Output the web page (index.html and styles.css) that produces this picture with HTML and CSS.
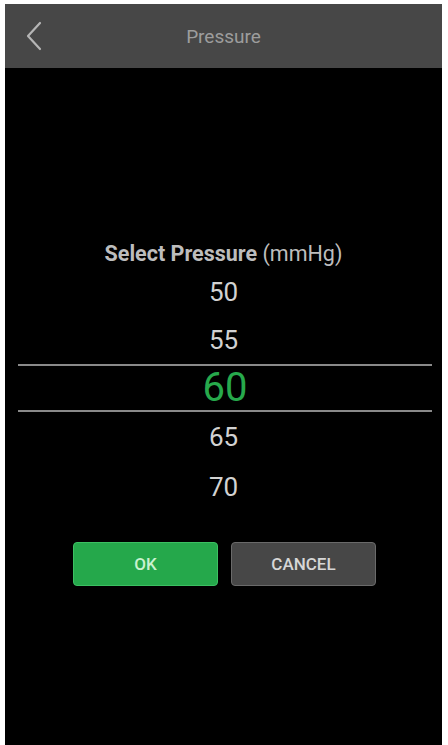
FILE: index.html
```html
<!DOCTYPE html>
<html lang="en">
<head>
    <meta charset="UTF-8">
    <meta name="viewport" content="width=device-width, initial-scale=1.0">
    <title>Pressure</title>
    <link rel="stylesheet" href="styles.css">
</head>
<body>
    <div class="phone">
        <!-- Top bar -->
        <div class="topbar">
            <button class="back" type="button" aria-label="Back">
                <svg width="18" height="30" viewBox="0 0 18 30">
                    <polyline points="15,2 3,15 15,28" fill="none" stroke="#b5b5b5" stroke-width="2.2" stroke-linecap="round" stroke-linejoin="round"/>
                </svg>
            </button>
            <div class="title">Pressure</div>
        </div>

        <!-- Picker -->
        <div class="content">
            <div class="picker-label"><b>Select Pressure</b> (mmHg)</div>
            <div class="picker">
                <div class="row">50</div>
                <div class="row">55</div>
                <div class="row selected">60</div>
                <div class="row below">65</div>
                <div class="row below">70</div>
            </div>
            <div class="actions">
                <button class="btn ok" type="button">OK</button>
                <button class="btn cancel" type="button">CANCEL</button>
            </div>
        </div>
    </div>
</body>
</html>
```

FILE: styles.css
```css
/* Page frame */
body {
    margin: 0;
    background: #ffffff;
    font-family: Roboto, "Liberation Sans", sans-serif;
}

.phone {
    margin: 4px 6px 0 5px;
    width: 437px;
    height: 741px;
    background: #000000;
    overflow: hidden;
}

/* Header bar */
.topbar {
    position: relative;
    height: 64px;
    background: #474747;
    display: flex;
    align-items: center;
    justify-content: center;
}

.back {
    position: absolute;
    left: 20px;
    top: 17px;
    padding: 0;
    background: none;
    border: none;
}

.title {
    color: #9d9d9d;
    font-size: 19px;
}

/* Picker area */
.content {
    padding-top: 174px;
}

.picker-label {
    text-align: center;
    color: #bdbdbd;
    font-size: 21.5px;
    line-height: 24px;
}

.picker-label b {
    font-weight: 700;
}

.picker {
    margin-top: 2px;
}

.row {
    height: 48px;
    line-height: 48px;
    text-align: center;
    color: #d2d2d2;
    font-size: 26px;
}

.row.below {
    height: 50px;
    line-height: 50px;
}

.row.selected {
    height: 44px;
    line-height: 44px;
    margin: 0 10px 0 13px;
    border-top: 2px solid #8a8a8a;
    border-bottom: 2px solid #8a8a8a;
    color: #27a94c;
    font-size: 40px;
}

/* Buttons */
.actions {
    display: flex;
    justify-content: center;
    gap: 13px;
    margin-top: 30px;
    padding-left: 2px;
}

.btn {
    width: 145px;
    height: 44px;
    border-radius: 4px;
    font-family: Roboto, "Liberation Sans", sans-serif;
    font-size: 17px;
    font-weight: 500;
}

.ok {
    background: #25a84b;
    border: 1px solid #3cc062;
    color: #c9f2cf;
}

.cancel {
    background: #474747;
    border: 1px solid #6a6a6a;
    color: #d6d6d6;
}
```
